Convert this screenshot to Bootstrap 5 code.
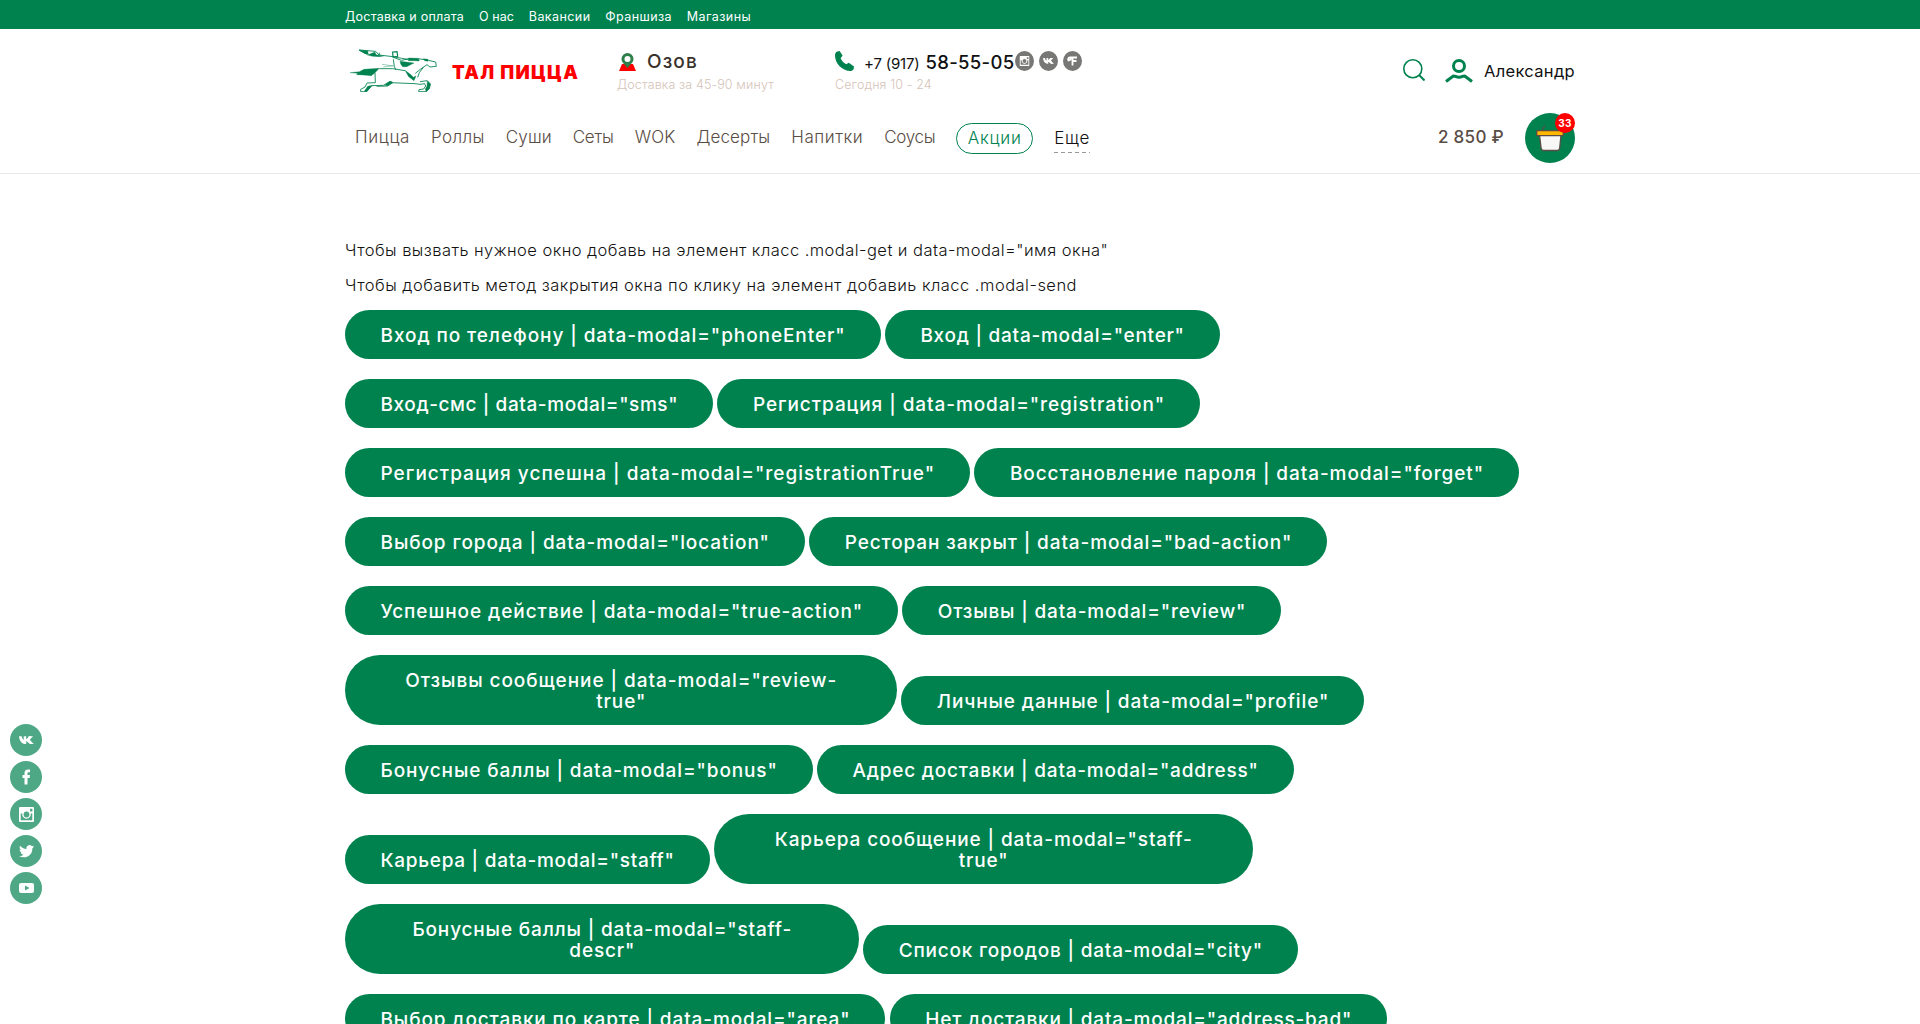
<!DOCTYPE html>
<html lang="ru">
<head>
<meta charset="utf-8">
<meta name="viewport" content="width=device-width, initial-scale=1">
<title>Тал Пицца</title>
<link href="https://cdn.jsdelivr.net/npm/bootstrap@5.3.0/dist/css/bootstrap.min.css" rel="stylesheet">
<style>
:root{--tal:#00824f;--brown:#594d45}
body{font-family:Inter,"Noto Sans",sans-serif;font-size:16px;color:#111;background:#fff;height:1024px;overflow:hidden}
a{color:inherit;text-decoration:none}
svg{display:block;flex:none}
.wrap{width:1230px;margin:0 auto}
.topline{height:29px;background:var(--tal);color:#fff;font-size:12.5px;line-height:24px;padding-top:5px}
.topline .wrap{gap:14.8px;letter-spacing:.42px}
.topline a:nth-child(1){letter-spacing:.25px}
.topline a:nth-child(2){letter-spacing:.08px}
.site-head{border-bottom:1px solid #e8e8e8;height:145px}
.head-row{height:84px}
.horse{margin:19px 0 0 5px}
.brand-name{font-size:18.5px;font-weight:900;color:#f00;letter-spacing:1.25px;line-height:22px;margin:32px 0 0 12px;width:165px}
.place{width:218px;margin-top:22px}
.phone{margin-top:22px}
.hint{font-size:12.5px;font-weight:300;line-height:23px;color:#d5c3b9;letter-spacing:.13px}
.line-main{height:22px;line-height:22px}
.pin{margin:-1px 0 0 2px}
.town{font-size:19px;font-weight:500;letter-spacing:1.1px;margin-left:11px;color:#3a322c}
.tel-code{font-size:15px;letter-spacing:-.2px;margin-left:10px}
.tel-num{font-size:18.5px;font-weight:500;letter-spacing:.3px;margin-left:6px;line-height:22px}
.mini-socials{gap:5px;margin-left:1px}
.account{margin-top:29px;height:26px;line-height:26px;font-size:16.5px;letter-spacing:.32px}
.search{margin-top:-3px}
.person{margin:0 11px 0 20px}
.menu-row{height:50px;padding-left:10px;font-size:17px;font-weight:300;color:var(--brown)}
.menu{gap:20.9px;letter-spacing:.43px}
.menu>:nth-child(1){letter-spacing:.68px}
.menu>:nth-child(3){letter-spacing:.13px}
.menu>:nth-child(4){letter-spacing:-.2px}
.menu>:nth-child(5){letter-spacing:.2px}
.menu>:nth-child(6){letter-spacing:.14px}
.menu>:nth-child(7){letter-spacing:.54px}
.menu>:nth-child(8){letter-spacing:-.3px}
.menu>.promo{border:1px solid var(--tal);border-radius:16px;color:var(--tal);height:31px;line-height:29px;padding:0 10.5px;letter-spacing:.8px}
.menu>.more{color:#111;background:repeating-linear-gradient(90deg,#999 0 4px,transparent 4px 7px) 0 100%/100% 1px no-repeat;height:29px;line-height:29px;letter-spacing:.8px}
.sum{font-size:17px;font-weight:500;letter-spacing:.3px;margin-right:21px}
.basket{width:50px;height:50px}
.count{width:20px;height:20px;font-size:10px;font-weight:700;line-height:20px;background:#f00;letter-spacing:.3px}
.intro{padding-top:64px}
.intro p{font-size:16.5px;font-weight:300;line-height:24px;margin-bottom:11px;letter-spacing:.45px;white-space:nowrap}
.intro p+p{letter-spacing:.48px;margin-bottom:13px}
.pill-row{gap:4.3px;margin-bottom:20px}
.pill{background:var(--tal);color:#fff;font-size:19px;font-weight:500;line-height:21px;padding:15px 35px 13px 35.5px;border-radius:35px;text-align:center;letter-spacing:.88px;white-space:nowrap}
.r1 :nth-child(1){letter-spacing:.92px}.r1 :nth-child(2){letter-spacing:.74px}
.r2 :nth-child(1){letter-spacing:.59px}.r2 :nth-child(2){letter-spacing:.92px}
.r3 :nth-child(1){letter-spacing:1.01px}.r3 :nth-child(2){letter-spacing:.91px}
.r4 :nth-child(1){letter-spacing:.9px}
.r5 :nth-child(1){letter-spacing:.94px}.r5 :nth-child(2){letter-spacing:.83px}
.r6 :nth-child(1){width:552px;letter-spacing:.94px}
.r7 :nth-child(2){letter-spacing:.78px}
.r8 :nth-child(1){letter-spacing:.72px}.r8 :nth-child(2){width:539px}
.r9 :nth-child(1){width:514px;letter-spacing:.84px}.r9 :nth-child(2){letter-spacing:.78px}
.r10 :nth-child(2){letter-spacing:.81px}
.side{left:10px;top:724px;gap:5px;opacity:.69}
</style>
<script src="https://cdn.jsdelivr.net/npm/bootstrap@5.3.0/dist/js/bootstrap.bundle.min.js"></script>
</head>
<body>
<svg width="0" height="0" class="position-absolute" aria-hidden="true">
<defs>
<symbol id="vk" viewBox="0 0 14 9"><path d="M0 .6h2.400c.4 1.800 1.300 3.200 2 3.500V.6h2.300v2.700C7.600 3.100 8.600 1.900 9 .6h2.300C11 1.900 10.100 3 9.300 3.600 10.400 4.200 11.500 5.300 12 7.300L13.300 8H10.700C9.200 7.800 8.500 6 6.700 5.500V8C3.300 8 .5 6 0 .6z"/><path d="M9.500.6h3.700L9.800 4.200 14 8h-3.500L6.700 4.500z"/></symbol>
<symbol id="insta" viewBox="0 0 14 14"><path fill-rule="evenodd" d="M1 0h12a1 1 0 0 1 1 1v12a1 1 0 0 1-1 1H1a1 1 0 0 1-1-1V1a1 1 0 0 1 1-1zm9.300 1.700v2.400h2.200V1.700zM1.600 6v6.400h10.800V6h-1.500A4 4 0 1 1 3.100 6zM7 4.300a2.700 2.700 0 1 0 0 5.400 2.700 2.700 0 0 0 0-5.400z"/></symbol>
</defs>
</svg>

<div class="topline">
  <nav class="wrap d-flex">
    <a href="#">Доставка и оплата</a><a href="#">О нас</a><a href="#">Вакансии</a><a href="#">Франшиза</a><a href="#">Магазины</a>
  </nav>
</div>

<header class="site-head">
  <div class="wrap">
    <div class="head-row d-flex align-items-start">
      <svg class="horse" width="90" height="44" viewBox="30 24 270 132" fill="none" stroke="#00824f" stroke-width="2.600">
        <path d="M57 30l50 4 10 11 42 5 26 5 20 3M118 38v7M58 31l24 12M160 52l24 9 21-4M160 58l3 22 5 10"/>
        <path d="M126 73l34 5M130 81l30-4" opacity=".45"/>
        <path d="M158 36l13-1 2 14-14 2z" stroke-width="3.500"/>
        <path d="M235 56l30 5 22 5 2 13-19 2-9-7-20 14-15 12M250 82l-12 16-5 14M118 86h40l37 6M240 125l22-3 9 10-3 14-10 9h-22l1-6 14-2 6-9-3-7-14 2-15-2-73-3M105 98l1 30-25 1-6 12-13 7v7h18l15-18 35-1 20-12 8 4-15 10-33 1"/>
        <g fill="#00824f" stroke-width="1"><path d="M57 30l26 2 2 11-10-2z"/><path d="M82 45l23-9 3 8 22 4-12 2-20-1z"/><path d="M30 98l28-3 14-7 46-3-13 13-11 9-24-2-20-1 3-4z"/><path d="M205 54l30 1 3 8-16-1-17 0z"/><path d="M180 64l42 5-22 11-12 0-6-8z"/><path d="M195 91l18 13 7 8 8-4-6 14-16-12zM97 136l-17 19-7-1 10-15zM134 136l16-12 8 3-14 10zM262 123l9 9-3 14-10 9-2-8 5-9z"/><path d="M250 56l14 2v6l-10-2z"/></g>
      </svg>
      <div class="brand-name">ТАЛ ПИЦЦА</div>
      <div class="place">
        <div class="line-main d-flex align-items-center">
          <svg class="pin" width="17" height="18" viewBox="0 0 17 18"><path fill="#f00" d="M3 11h11l3 7H0z"/><path fill="#2f7f4b" fill-rule="evenodd" d="M8.500 0a6 6 0 0 1 6 6c0 3.500-3.500 5.500-6 9-2.500-3.500-6-5.500-6-9a6 6 0 0 1 6-6zm0 3a3 3 0 1 0 0 6 3 3 0 0 0 0-6z"/></svg>
          <span class="town">Озов</span>
        </div>
        <div class="hint">Доставка за 45-90 минут</div>
      </div>
      <div class="phone">
        <div class="line-main d-flex">
          <svg width="19" height="20" viewBox="0 0 19 20"><path fill="#00824f" d="M1.500.8L4.600 0l3 4.600-2 2.700c1.200 2.600 3 4.600 5.600 6l2.600-1.500L19 15.500l-.4 2.700c-1 1.300-2.400 1.800-4 1.800C6.500 19.200.2 12.500 0 4.500 0 3 .5 1.700 1.500.8z"/></svg>
          <span class="d-flex align-items-baseline"><span class="tel-code">+7 (917)</span><span class="tel-num">58-55-05</span></span>
          <span class="mini-socials d-flex">
            <svg width="19" height="20" viewBox="0 0 19 20"><ellipse cx="9.500" cy="10" rx="9.500" ry="10" fill="#777875"/><use href="#insta" x="4.500" y="5" width="10" height="10" fill="#fff"/></svg>
            <svg width="19" height="20" viewBox="0 0 19 20"><ellipse cx="9.500" cy="10" rx="9.500" ry="10" fill="#777875"/><use href="#vk" x="4" y="6.500" width="11" height="7" fill="#fff"/></svg>
            <svg width="19" height="20" viewBox="0 0 19 20"><ellipse cx="9.500" cy="10" rx="9.500" ry="10" fill="#777875"/><path fill="none" stroke="#fff" stroke-width="1.800" d="M14 6.500H7.500C5.500 6.300 4.500 8 5.500 9.500L7.500 8.700V6.500M9.500 6.500V14.500M9.500 10h4"/></svg>
          </span>
        </div>
        <div class="hint">Сегодня 10 - 24</div>
      </div>
      <div class="account ms-auto d-flex align-items-center">
        <svg class="search" width="22" height="22" viewBox="0 0 22 22" fill="none" stroke="#00824f" stroke-width="1.600"><circle cx="9.800" cy="9.800" r="9"/><path d="M16 16l5.500 5.500" stroke-width="2"/></svg>
        <svg class="person" width="28" height="24" viewBox="0 0 28 24" fill="none" stroke="#00824f" stroke-width="3"><circle cx="14" cy="7" r="5.500"/><path stroke-linejoin="round" d="M1 22.500l7-5.300c2-.7 2.500 1 6 1s4-1.700 6-1l7 5.300"/></svg>
        <span>Александр</span>
      </div>
    </div>
    <div class="menu-row d-flex align-items-center">
      <nav class="menu d-flex align-items-center">
        <a href="#">Пицца</a><a href="#">Роллы</a><a href="#">Суши</a><a href="#">Сеты</a><a href="#">WOK</a><a href="#">Десерты</a><a href="#">Напитки</a><a href="#">Соусы</a><a href="#" class="promo">Акции</a><a href="#" class="more">Еще</a>
      </nav>
      <span class="sum ms-auto">2 850 ₽</span>
      <a href="#" class="basket position-relative">
        <svg width="50" height="50" viewBox="0 0 50 50"><circle cx="25" cy="25" r="25" fill="#00824f"/><path d="M17 17l3-4.500" stroke="#594d45" stroke-width="1.300"/><path d="M14.500 22h21.500l-1.300 13c-.2 1.800-1.200 2.500-3 2.500H19c-1.800 0-2.700-.7-2.900-2.500z" fill="#f7f7f7" stroke="#594d45" stroke-width="1.300"/><path d="M11.700 17.700h26.600v5H11.700z" fill="#ffb700" stroke="#594d45" stroke-width="1.300"/></svg>
        <span class="count position-absolute top-0 end-0 rounded-circle text-white text-center">33</span>
      </a>
    </div>
  </div>
</header>

<main class="wrap intro">
  <p>Чтобы вызвать нужное окно добавь на элемент класс .modal-get и data-modal="имя окна"</p>
  <p>Чтобы добавить метод закрытия окна по клику на элемент добавиь класс .modal-send</p>
  <div class="pill-row r1 d-flex align-items-end"><a href="#" class="pill">Вход по телефону | data-modal="phoneEnter"</a><a href="#" class="pill">Вход | data-modal="enter"</a></div>
  <div class="pill-row r2 d-flex align-items-end"><a href="#" class="pill">Вход-смс | data-modal="sms"</a><a href="#" class="pill">Регистрация | data-modal="registration"</a></div>
  <div class="pill-row r3 d-flex align-items-end"><a href="#" class="pill">Регистрация успешна | data-modal="registrationTrue"</a><a href="#" class="pill">Восстановление пароля | data-modal="forget"</a></div>
  <div class="pill-row r4 d-flex align-items-end"><a href="#" class="pill">Выбор города | data-modal="location"</a><a href="#" class="pill">Ресторан закрыт | data-modal="bad-action"</a></div>
  <div class="pill-row r5 d-flex align-items-end"><a href="#" class="pill">Успешное действие | data-modal="true-action"</a><a href="#" class="pill">Отзывы | data-modal="review"</a></div>
  <div class="pill-row r6 d-flex align-items-end"><a href="#" class="pill">Отзывы сообщение | data-modal="review-<br>true"</a><a href="#" class="pill">Личные данные | data-modal="profile"</a></div>
  <div class="pill-row r7 d-flex align-items-end"><a href="#" class="pill">Бонусные баллы | data-modal="bonus"</a><a href="#" class="pill">Адрес доставки | data-modal="address"</a></div>
  <div class="pill-row r8 d-flex align-items-end"><a href="#" class="pill">Карьера | data-modal="staff"</a><a href="#" class="pill">Карьера сообщение | data-modal="staff-<br>true"</a></div>
  <div class="pill-row r9 d-flex align-items-end"><a href="#" class="pill">Бонусные баллы | data-modal="staff-<br>descr"</a><a href="#" class="pill">Список городов | data-modal="city"</a></div>
  <div class="pill-row r10 d-flex align-items-end"><a href="#" class="pill">Выбор доставки по карте | data-modal="area"</a><a href="#" class="pill">Нет доставки | data-modal="address-bad"</a></div>
</main>

<aside class="side position-fixed d-flex flex-column">
  <svg width="32" height="32" viewBox="0 0 32 32"><circle cx="16" cy="16" r="16" fill="#00824f"/><use href="#vk" x="9" y="11.500" width="15" height="9.600" fill="#fff"/></svg>
  <svg width="32" height="32" viewBox="0 0 32 32"><circle cx="16" cy="16" r="16" fill="#00824f"/><path fill="#fff" d="M14.500 23.500V17H12.500v-3h2v-2c0-2.500 1.500-3.500 3.500-3.500h2v2.700h-1.400c-.8 0-1.100.4-1.100 1.200V14H20l-.4 3h-2.100v6.500z"/></svg>
  <svg width="32" height="32" viewBox="0 0 32 32"><circle cx="16" cy="16" r="16" fill="#00824f"/><use href="#insta" x="9" y="9" width="15" height="15" fill="#fff"/></svg>
  <svg width="32" height="32" viewBox="0 0 32 32"><circle cx="16" cy="16" r="16" fill="#00824f"/><path fill="#fff" d="M24 11.500c-.5.300-1 .4-1.600.5.500-.4 1-.9 1.200-1.600-.6.300-1.200.6-1.900.7a3.100 3.100 0 0 0-5.300 2.800c-2.600-.1-4.800-1.300-6.300-3.200-.9 1.500-.3 3.200.9 4.100-.5 0-1-.1-1.400-.4 0 1.500 1 2.800 2.500 3.100-.4.100-.9.100-1.400 0 .4 1.300 1.500 2.100 2.900 2.200-1.300 1-2.900 1.500-4.600 1.300 5.500 3.300 13.500.4 13.400-7.800.600-.5 1.200-1 1.600-1.700z"/></svg>
  <svg width="32" height="32" viewBox="0 0 32 32"><circle cx="16" cy="16" r="16" fill="#00824f"/><path fill="#fff" fill-rule="evenodd" d="M11 11h11a2 2 0 0 1 2 2v6a2 2 0 0 1-2 2H11a2 2 0 0 1-2-2v-6a2 2 0 0 1 2-2zm4 2.500v5l4.500-2.500z"/></svg>
</aside>
</body>
</html>
